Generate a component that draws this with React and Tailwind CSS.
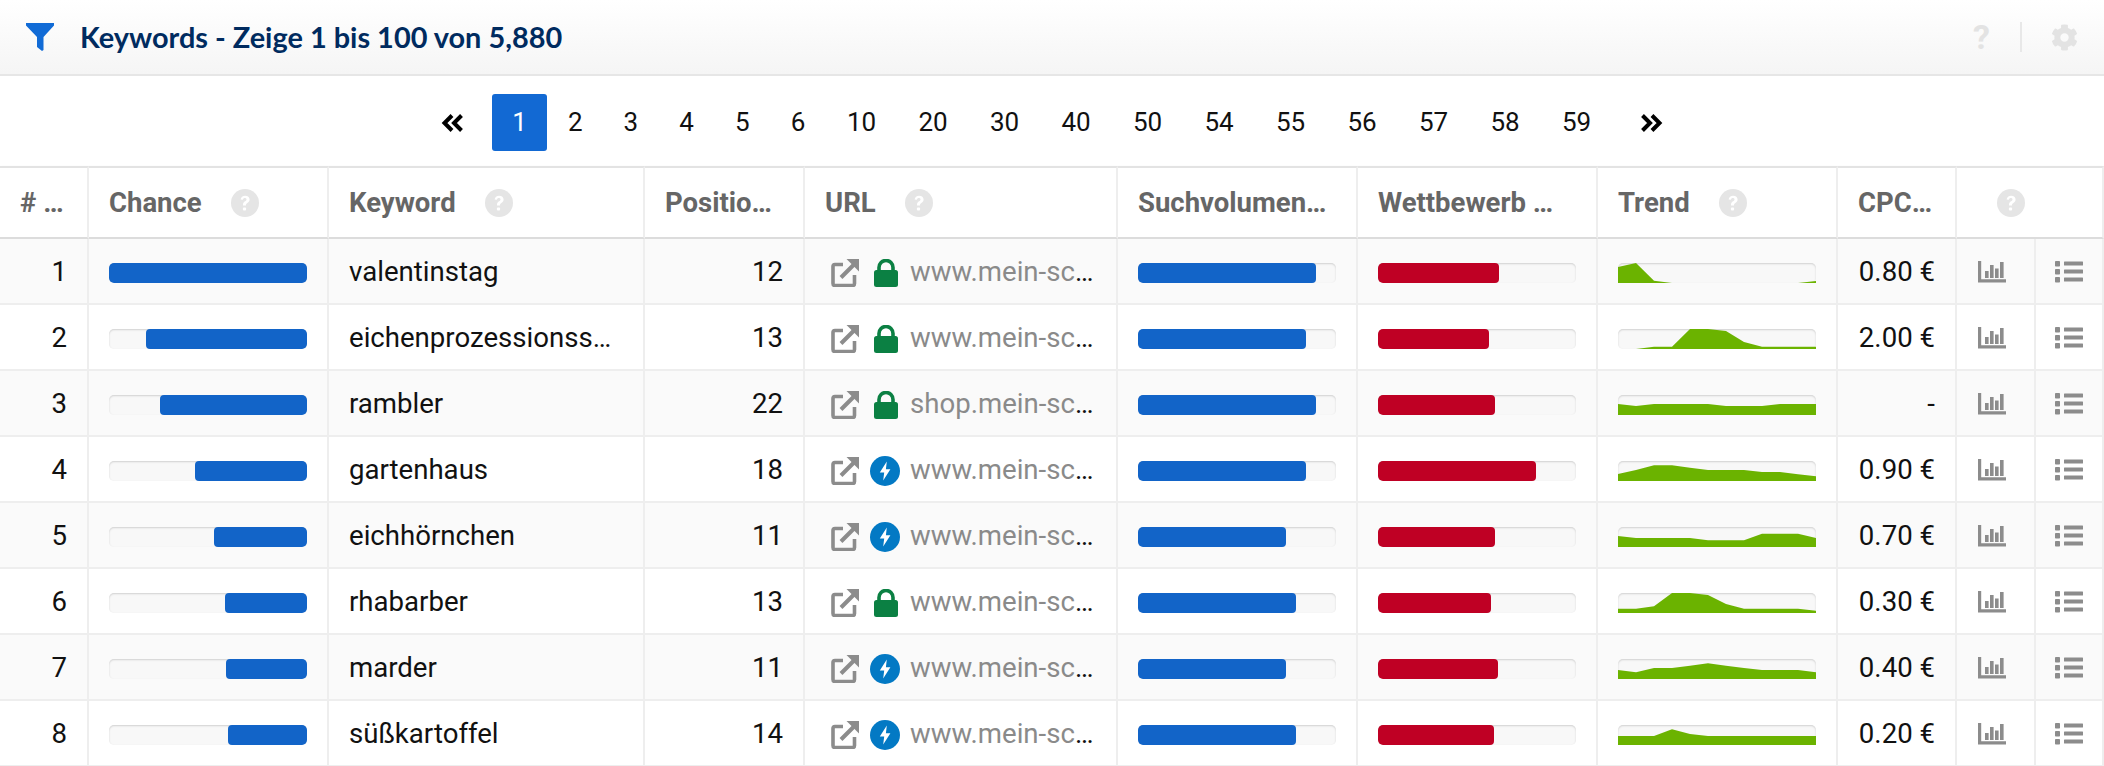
import React from "react";

const FONT = "[font-family:Roboto,sans-serif]";

const Help = () => (
  <svg viewBox="0 0 28 28" className="w-7 h-7 shrink-0" aria-hidden="true">
    <circle cx="14" cy="14" r="14" fill="#e5e5e5" />
    <path d="M9.600 10.600c.3-2.400 2.100-3.800 4.600-3.800 2.600 0 4.400 1.500 4.400 3.700 0 1.700-.9 2.600-2.200 3.400-1.100.7-1.400 1.100-1.400 2.100v.4h-3v-.6c0-1.700.6-2.600 2-3.500 1-.6 1.500-1 1.500-1.800 0-.8-.7-1.400-1.700-1.400s-1.700.6-1.900 1.700z" fill="#fff" />
    <rect x="11.900" y="18.400" width="3.200" height="3.200" rx="1" fill="#fff" />
  </svg>
);

const Ext = () => (
  <svg viewBox="0 0 28 28" className="w-7 h-7 inline-block align-[-6px]" aria-hidden="true">
    <path d="M12 5.500H4A2 2 0 0 0 2 7.500V24.500a2 2 0 0 0 2 2H21.500a2 2 0 0 0 2-2V16" fill="none" stroke="#8c8c8c" strokeWidth="3.600" />
    <path d="M10 18.500 24 4.500" fill="none" stroke="#8c8c8c" strokeWidth="4" />
    <path d="M15.500 0H28v12.500z" fill="#8c8c8c" />
  </svg>
);

const Lock = () => (
  <svg viewBox="0 0 24 28" className="w-6 h-7 inline-block align-[-6px]" aria-hidden="true">
    <path d="M5 12V8.500a7 7 0 0 1 14 0V12" fill="none" stroke="#0b8043" strokeWidth="3.600" />
    <rect x="0" y="11" width="24" height="17" rx="2.500" fill="#0b8043" />
  </svg>
);

const Amp = () => (
  <svg viewBox="0 0 30 30" className="w-[30px] h-[30px] inline-block align-[-7px]" aria-hidden="true">
    <circle cx="15" cy="15" r="15" fill="#0379c4" />
    <path d="M16.800 5.500 9.800 16.600h4.400l-1 8 7.200-11.400h-4.500z" fill="#fff" />
  </svg>
);

const Chart = () => (
  <svg viewBox="0 0 28 22" className="w-7 h-[22px] block ml-[1px]" aria-hidden="true">
    <path d="M1.600 0v19.900H28" fill="none" stroke="#8c8c8c" strokeWidth="3.200" />
    <rect x="7" y="10" width="3.600" height="7" fill="#8c8c8c" />
    <rect x="12" y="4" width="3.600" height="13" fill="#8c8c8c" />
    <rect x="17" y="7.500" width="3.600" height="9.500" fill="#8c8c8c" />
    <rect x="22" y="1" width="3.600" height="16" fill="#8c8c8c" />
  </svg>
);

const ListIcon = () => (
  <svg viewBox="0 0 28 22" className="w-7 h-[22px] block mx-auto" aria-hidden="true">
    {[0, 8, 16].map((y) => (
      <g key={y} fill="#8c8c8c">
        <rect x="0" y={y} width="5" height="5.500" rx="0.800" />
        <rect x="9" y={y + 0.6} width="19" height="4" rx="0.500" />
      </g>
    ))}
  </svg>
);

const Gear = () => (
  <svg viewBox="0 0 512 512" className="w-[27px] h-[27px]" aria-hidden="true">
    <path fill="#e3e3e3" d="M487 316l-42-25a192 192 0 0 0 0-70l42-25c5-3 7-9 6-14-11-35-30-67-54-94-4-4-10-5-15-2l-42 25a188 188 0 0 0-61-35V27c0-6-4-10-9-12a246 246 0 0 0-112 0c-5 2-9 6-9 12v49c-23 8-44 20-61 35L88 86c-5-3-11-2-15 2-24 27-43 59-54 94-1 5 1 11 6 14l42 25a192 192 0 0 0 0 70l-42 25c-5 3-7 9-6 14 11 35 30 67 54 94 4 4 10 5 15 2l42-25c17 15 38 27 61 35v49c0 6 4 10 9 12 37 8 75 8 112 0 5-2 9-6 9-12v-49c23-8 44-20 61-35l42 25c5 3 11 2 15-2 24-27 43-59 54-94 1-5-1-11-6-14zM256 336a80 80 0 1 1 0-160 80 80 0 0 1 0 160z" />
  </svg>
);

const ChevL = ({ flip }) => (
  <svg viewBox="0 0 24 20" className={`w-6 h-5 ${flip ? "rotate-180" : ""}`} aria-hidden="true">
    <path d="M11 2.500 3.500 10l7.500 7.500M20.500 2.500 13 10l7.500 7.500" fill="none" stroke="#000" strokeWidth="4" />
  </svg>
);

const Bar = ({ w, color, right }) => (
  <div className={`w-[198px] h-5 rounded-[5px] bg-[#f8f8f8] shadow-[inset_0_1px_2px_rgba(0,0,0,0.16)] flex overflow-hidden ${right ? "justify-end" : ""}`}>
    <div className={`h-full rounded-[4px] ${color}`} style={{ width: `${w}px` }} />
  </div>
);

const Spark = ({ v }) => {
  const pts = v.map((h, i) => `${i * 18},${20 - h / 3}`).join(" ");
  return (
    <div className="w-[198px] h-5 rounded-[5px] bg-[#f8f8f8] shadow-[inset_0_1px_2px_rgba(0,0,0,0.16)]">
      <svg viewBox="0 0 198 20" className="block w-[198px] h-5" aria-hidden="true">
        <polygon points={`0,20 ${pts} 198,20`} fill="#6bb300" />
      </svg>
    </div>
  );
};

const rows = [
  { n: 1, kw: "valentinstag", pos: 12, host: "www.mein-schoener-garten.de/valentinstag", ic: "l", cpc: "0.80 €", c: 198, s: 178, w: 121, t: [48,60,7,0,0,0,0,0,0,0,0,6] },
  { n: 2, kw: "eichenprozessionsspinner", pos: 13, host: "www.mein-schoener-garten.de/eichen", ic: "l", cpc: "2.00 €", c: 161, s: 168, w: 111, t: [0,0,7,7,60,60,54,21,7,7,7,7] },
  { n: 3, kw: "rambler", pos: 22, host: "shop.mein-schoener-garten.de/rambler", ic: "l", cpc: "-", c: 147, s: 178, w: 117, t: [33,27,33,33,33,33,27,27,27,33,33,33] },
  { n: 4, kw: "gartenhaus", pos: 18, host: "www.mein-schoener-garten.de/gartenhaus", ic: "a", cpc: "0.90 €", c: 112, s: 168, w: 158, t: [21,33,47,47,40,33,33,33,27,27,20,14] },
  { n: 5, kw: "eichhörnchen", pos: 11, host: "www.mein-schoener-garten.de/eich", ic: "a", cpc: "0.70 €", c: 93, s: 148, w: 117, t: [33,27,27,27,27,20,20,20,40,40,40,27] },
  { n: 6, kw: "rhabarber", pos: 13, host: "www.mein-schoener-garten.de/rhabarber", ic: "l", cpc: "0.30 €", c: 82, s: 158, w: 113, t: [13,13,20,60,60,54,27,13,13,13,13,7] },
  { n: 7, kw: "marder", pos: 11, host: "www.mein-schoener-garten.de/marder", ic: "a", cpc: "0.40 €", c: 81, s: 148, w: 120, t: [27,20,33,33,40,47,40,33,27,27,27,20] },
  { n: 8, kw: "süßkartoffel", pos: 14, host: "www.mein-schoener-garten.de/suess", ic: "a", cpc: "0.20 €", c: 79, s: 158, w: 116, t: [27,27,27,47,33,27,27,27,27,27,27,27] },
];

const pages = [1, 2, 3, 4, 5, 6, 10, 20, 30, 40, 50, 54, 55, 56, 57, 58, 59];

const th = "h-[73px] border-r-2 border-[#eee] pl-5 text-left align-middle text-[27.500px] font-bold text-[#666]";
const td = "h-[66px] border-r-2 border-b-2 border-[#eee] align-middle text-[27.600px] text-[#111]";
const txt = `${td} px-5 pt-[1px]`;
const viz = `${td} px-5 pt-[3px]`;

const Head = ({ label, help = true }) => (
  <div className="flex items-center gap-[29px]">
    <span className="min-w-0 truncate">{label}</span>
    {help && <Help />}
  </div>
);

export default function App() {
  return (
    <div className={`h-[766px] w-full overflow-hidden bg-white ${FONT}`}>
      <header className="h-[76px] border-b-2 border-[#e6e6e6] bg-gradient-to-b from-white to-[#f5f5f5] flex items-center pl-[26px] pr-[26px]">
        <svg viewBox="0 0 28 28" className="w-7 h-7" aria-hidden="true">
          <path d="M0 0h28v2.500L17.500 14v13l-1.500 1-5-4V14L0 2.500z" fill="#116bd6" />
        </svg>
        <h1 className="ml-[26px] text-[28.900px] font-bold text-[#002b5f] [font-family:Lato,sans-serif]">Keywords - Zeige 1 bis 100 von 5,880</h1>
        <div className="ml-auto flex items-center">
          <span className="text-[34px] font-bold leading-none text-[#e3e3e3]">?</span>
          <span className="ml-[30px] mr-[29px] h-[30px] w-0.5 bg-[#e8e8e8]" />
          <Gear />
        </div>
      </header>

      <nav className="h-[90px] pt-[3px] flex items-center justify-center text-[26px] text-[#111]">
        <span className="w-[78px] h-[57px] flex items-center justify-center"><ChevL /></span>
        {pages.map((p) => (
          <span
            key={p}
            className={
              p === 1
                ? "w-[55.700px] h-[57px] flex items-center justify-center rounded-[3px] bg-[#1269d3] text-white"
                : p < 10
                ? "w-[55.700px] h-[57px] flex items-center justify-center"
                : "w-[71.500px] h-[57px] flex items-center justify-center"
            }
          >
            {p}
          </span>
        ))}
        <span className="w-[78px] h-[57px] flex items-center justify-center"><ChevL flip /></span>
      </nav>

      <table className="table-fixed w-[2104px] border-separate border-spacing-0">
        <colgroup>
          <col className="w-[89px]" />
          <col className="w-[240px]" />
          <col className="w-[316px]" />
          <col className="w-[160px]" />
          <col className="w-[313px]" />
          <col className="w-[240px]" />
          <col className="w-[240px]" />
          <col className="w-[240px]" />
          <col className="w-[119px]" />
          <col className="w-[79px]" />
          <col className="w-[68px]" />
        </colgroup>
        <thead>
          <tr className="[&>th]:border-t-2 [&>th]:border-t-[#e3e3e3] [&>th]:border-b-2 [&>th]:border-b-[#dcdcdc] shadow-[0_2px_4px_rgba(0,0,0,0.08)]">
            <th className={`${th} pr-5`}><Head label="# Nummer" help={false} /></th>
            <th className={`${th} pr-5`}><Head label="Chance" /></th>
            <th className={`${th} pr-5`}><Head label="Keyword" /></th>
            <th className={`${th} pr-5`}><Head label="Position im Ranking" help={false} /></th>
            <th className={`${th} pr-5`}><Head label="URL" /></th>
            <th className={`${th} pr-5`}><Head label="Suchvolumen/Monat" help={false} /></th>
            <th className={`${th} pr-[34px]`}><Head label="Wettbewerb Stärke" help={false} /></th>
            <th className={`${th} pr-5`}><Head label="Trend" /></th>
            <th className={`${th} pr-5`}><Head label="CPC in Euro" help={false} /></th>
            <th colSpan={2} className={`${th} border-r-0 pl-10 pr-5`}><Help /></th>
          </tr>
        </thead>
        <tbody>
          {rows.map((r) => {
            const bg = r.n % 2 ? "bg-[#fafafa]" : "bg-white";
            return (
              <tr key={r.n} className={bg}>
                <td className={`${txt} text-right`}>{r.n}</td>
                <td className={viz}><Bar w={r.c} right color="bg-[#1264c8]" /></td>
                <td className={`${td} pl-5 pr-[28px] pt-[1px] truncate`}>{r.kw}</td>
                <td className={`${txt} text-right`}>{r.pos}</td>
                <td className={`${td} pl-[26px] pr-[10px] pt-[1px] truncate`}>
                  <Ext />
                  <span className={r.ic === "l" ? "ml-[15px] mr-3" : "ml-[11px] mr-[10px]"}>{r.ic === "l" ? <Lock /> : <Amp />}</span>
                  <span className="text-[#8a8a8a]">{r.host}</span>
                </td>
                <td className={viz}><Bar w={r.s} color="bg-[#1264c8]" /></td>
                <td className={viz}><Bar w={r.w} color="bg-[#bf0024]" /></td>
                <td className={viz}><Spark v={r.t} /></td>
                <td className={`${txt} text-right`}>{r.cpc}</td>
                <td className={txt}><Chart /></td>
                <td className={`${td} border-r-0 pt-[1px]`}><ListIcon /></td>
              </tr>
            );
          })}
        </tbody>
      </table>
    </div>
  );
}
